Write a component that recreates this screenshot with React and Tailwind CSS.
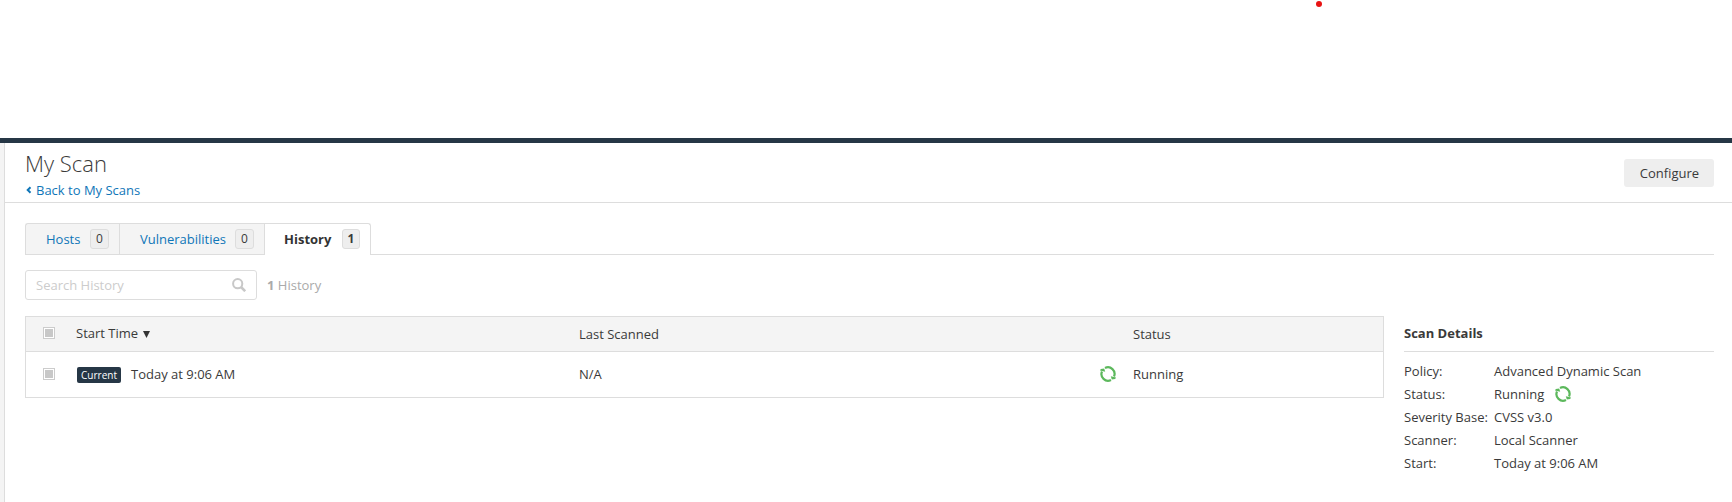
import React from "react";

function Spinner() {
  return (
    <svg width="16" height="16" viewBox="0 0 16 16" fill="none" className="block shrink-0">
      <g stroke="#5cb85c" strokeWidth="2.2">
        <path d="M5 2A6.6 6.6 0 0 1 14 10.5" />
        <path d="M11 14A6.6 6.6 0 0 1 2 5.5" />
      </g>
      <path d="M10.8 10.2L16 11.4 15.2 13 11.8 13.6zM5.2 5.8L0 4.6.8 3 4.2 2.4z" fill="#5cb85c" />
    </svg>
  );
}

function Check() {
  return (
    <span className="flex h-3 w-3 items-center justify-center border border-[#ccc] bg-white">
      <span className="h-2 w-2 bg-[#c8c8c8]" />
    </span>
  );
}

function Badge({ children, className }) {
  return (
    <span className={`flex h-5 items-center justify-center rounded-[3px] border border-[#ddd] bg-[#eee] text-xs leading-none text-[#3a3a3a] ${className}`}>
      {children}
    </span>
  );
}

const details = [
  ["Policy:", "Advanced Dynamic Scan"],
  ["Status:", "Running"],
  ["Severity Base:", "CVSS v3.0"],
  ["Scanner:", "Local Scanner"],
  ["Start:", "Today at 9:06 AM"],
];

export default function App() {
  return (
    <div className="relative flex h-[502px] w-[1732px] flex-col overflow-hidden bg-white font-['Open_Sans','Noto_Sans',sans-serif] text-[13px] leading-[18px] text-[#3a3a3a]">
      <span className="absolute left-[1316px] top-px h-1.5 w-1.5 rounded-full bg-[#e81313]" />
      <div className="h-[138px] shrink-0" />
      <div className="h-[5px] shrink-0 bg-[#263746]" />
      <div className="flex flex-1">
        <div className="w-[5px] shrink-0 border-r border-[#ddd] bg-[#f4f4f4]" />
        <main className="flex flex-1 flex-col">
          <header className="flex h-[60px] justify-between border-b border-[#ddd] pl-5 pr-[18px]">
            <div className="pt-[5px]">
              <h1 className="text-[22px] font-light leading-[30px]">My Scan</h1>
              <a className="mt-[3px] flex items-center text-[#0f76b8]">
                <svg width="6" height="8" viewBox="0 0 6 8" fill="none" stroke="currentColor" strokeWidth="2" className="ml-[1px] mr-1">
                  <path d="M4.5 1.2L1.7 4l2.8 2.8" />
                </svg>
                Back to My Scans
              </a>
            </div>
            <button className="mt-4 h-7 w-[90px] rounded-[3px] bg-[#eee] pl-px">Configure</button>
          </header>

          <nav className="ml-5 mr-[18px] mt-5 flex h-8 text-[#0f76b8]">
            <div className="flex w-[94px] items-center rounded-tl-[3px] border-y border-l border-[#ddd] bg-[#f4f4f4] pl-5">
              Hosts<Badge className="ml-auto mr-[10px] w-[19px]">0</Badge>
            </div>
            <div className="flex w-[145px] items-center border-y border-l border-[#ddd] bg-[#f4f4f4] pl-5">
              Vulnerabilities<Badge className="ml-auto mr-[10px] w-[19px]">0</Badge>
            </div>
            <div className="flex w-[107px] items-center rounded-tr-[3px] border-x border-t border-[#ddd] pb-px pl-[19px] font-bold text-[#333]">
              History<Badge className="ml-auto mr-[10px] w-[18px]">1</Badge>
            </div>
            <div className="flex-1 border-b border-[#ddd]" />
          </nav>

          <div className="ml-5 mt-[15px] flex h-[30px] items-center">
            <div className="flex h-[30px] w-[232px] items-center justify-between rounded-[3px] border border-[#ddd] pl-[10px] pr-[10px] text-[#ccc]">
              Search History
              <svg width="14" height="14" viewBox="0 0 14 14" fill="none" stroke="#c8c8c8" strokeWidth="2" className="-mt-px">
                <circle cx="5.7" cy="5.7" r="4.6" />
                <path d="M9 9l4.2 4.2" strokeWidth="2.6" />
              </svg>
            </div>
            <div className="ml-[10px] text-[#aaa]"><b>1</b> History</div>
          </div>

          <div className="ml-5 mr-[18px] mt-4 flex justify-between">
            <section className="h-[82px] w-[1359px] border border-[#ddd]">
              <div className="flex h-[35px] items-center border-b border-[#ddd] bg-[#f4f4f4] pl-[17px]">
                <div className="flex w-[536px] items-center pb-[2px]">
                  <Check />
                  <span className="ml-[21px]">Start Time</span>
                  <svg width="7" height="7" viewBox="0 0 7 7" className="ml-[5px] mt-[2px]">
                    <path d="M0 0h7L3.5 7z" fill="#333" />
                  </svg>
                </div>
                <div className="w-[554px]">Last Scanned</div>
                <div>Status</div>
              </div>
              <div className="flex h-[45px] items-center pb-[2px] pl-[17px]">
                <div className="flex w-[536px] items-center">
                  <Check />
                  <span className="ml-[22px] mt-[2px] flex h-4 w-11 items-center justify-center rounded-[2px] bg-[#263746] text-[10px] leading-none text-white">Current</span>
                  <span className="ml-[10px]">Today at 9:06 AM</span>
                </div>
                <div className="w-[521px]">N/A</div>
                <div className="w-[33px]"><Spinner /></div>
                <div>Running</div>
              </div>
            </section>

            <aside className="w-[310px]">
              <h2 className="h-9 border-b border-[#ddd] pt-2 font-bold">Scan Details</h2>
              <dl className="pt-[7px]">
                {details.map(([label, value]) => (
                  <div key={label} className="flex h-[23px] items-center">
                    <dt className="w-[90px] whitespace-nowrap">{label}</dt>
                    <dd className="flex items-center gap-[11px]">
                      {value}
                      {label === "Status:" && <Spinner />}
                    </dd>
                  </div>
                ))}
              </dl>
            </aside>
          </div>
        </main>
      </div>
    </div>
  );
}
